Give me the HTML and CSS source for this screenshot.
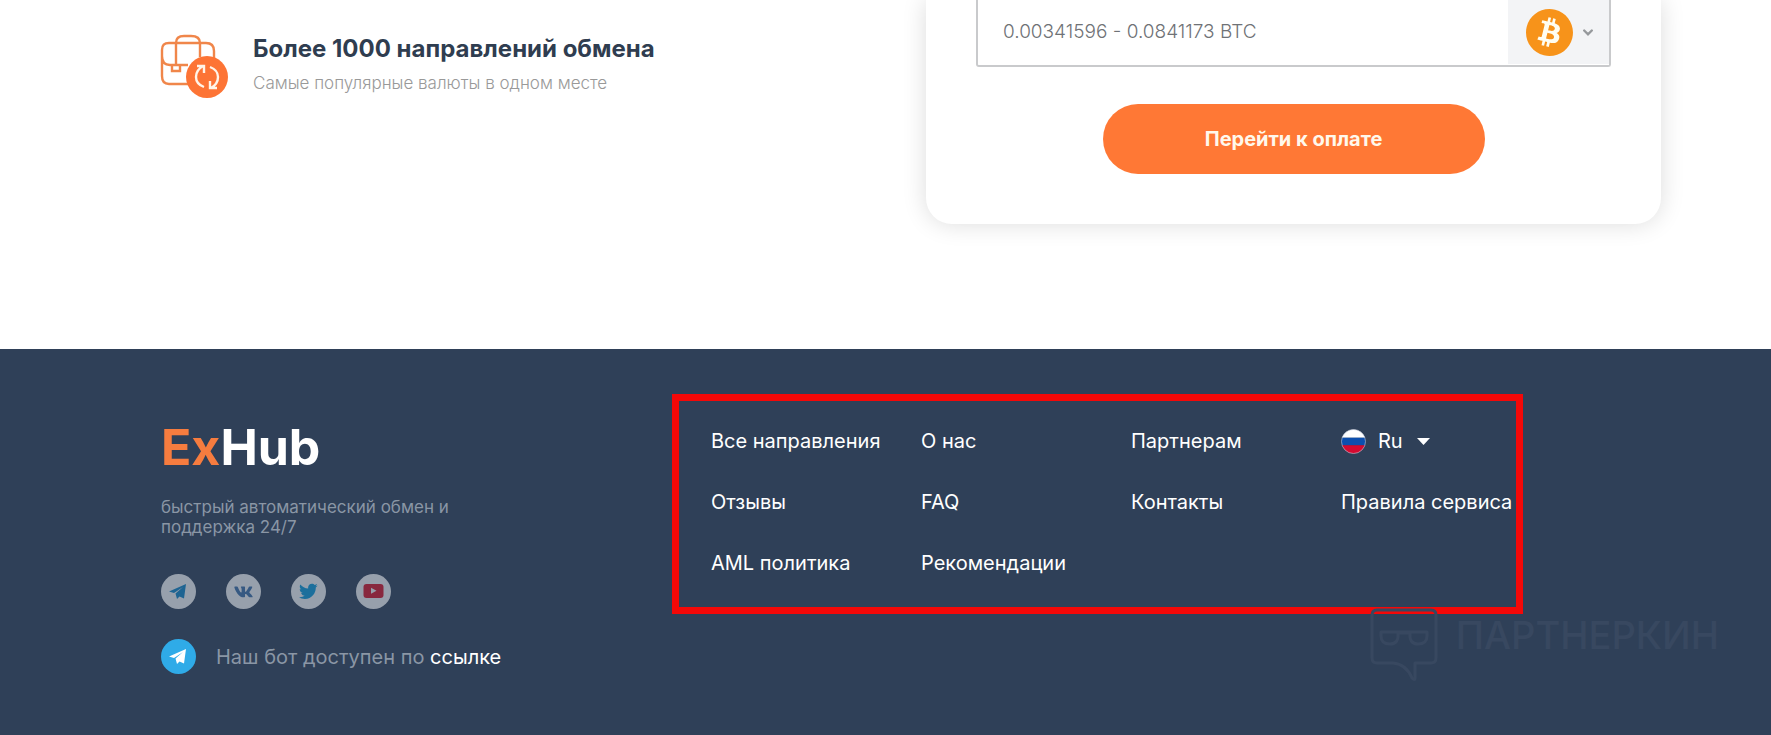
FILE: index.html
```html
<!DOCTYPE html>
<html lang="ru">
<head>
<meta charset="utf-8">
<meta name="viewport" content="width=device-width, initial-scale=1">
<title>ExHub</title>
<link rel="stylesheet" href="styles.css">
</head>
<body>
<main class="hero">
  <section class="feature">
    <svg class="feature-icon" viewBox="0 0 68 66" fill="none" stroke="#f0864a" stroke-width="2.4" aria-hidden="true">
      <path d="M16 32V9q0-7 8-7h7q9 0 9 7v14M16 9h30q8 0 8 8v8M16 9H9q-7 0-7 7v26q0 8 7 8h20M2 22q0 9 8 9h18M12 31v6h8v-6"/>
      <circle cx="47" cy="43" r="21" fill="#fd7435" stroke="none"/>
      <g stroke="#fff4e8" stroke-width="2.4">
        <path d="M44 53q-8-3-8-10t7-11M37 32h7v7M50 33q8 3 8 10t-7 11M57 54h-7v-7"/>
      </g>
    </svg>
    <div class="feature-text">
      <h2 class="feature-title">Более 1000 направлений обмена</h2>
      <p class="feature-note">Самые популярные валюты в одном месте</p>
    </div>
  </section>
  <form class="card">
    <div class="amount">
      <input class="amount-input" type="text" aria-label="Сумма" placeholder="0.00341596 - 0.0841173 BTC">
      <button class="currency" type="button" aria-label="Валюта: Bitcoin" aria-haspopup="listbox">
        <svg class="coin" viewBox="0 0 24 24" aria-hidden="true">
          <circle cx="12" cy="12" r="11.8" fill="#fffdf0"/>
          <path fill="#f7931a" d="M23.638 14.904c-1.602 6.43-8.113 10.34-14.542 8.736C2.67 22.05-1.244 15.525.362 9.105 1.962 2.67 8.475-1.243 14.9.358c6.43 1.605 10.342 8.115 8.738 14.548v-.002zm-6.35-4.613c.24-1.59-.974-2.45-2.64-3.03l.54-2.153-1.315-.33-.525 2.107c-.345-.087-.705-.167-1.064-.25l.526-2.127-1.32-.33-.54 2.165c-.285-.067-.565-.132-.84-.2l-1.815-.45-.35 1.407s.975.225.955.236c.535.136.63.486.615.766l-1.477 5.92c-.075.166-.24.406-.614.314.015.02-.96-.24-.96-.24l-.66 1.51 1.71.426.93.242-.54 2.19 1.32.327.54-2.17c.36.1.705.19 1.05.273l-.51 2.154 1.32.33.545-2.19c2.24.427 3.93.257 4.64-1.774.57-1.637-.03-2.58-1.217-3.196.854-.193 1.5-.76 1.68-1.93h.01zm-3.01 4.22c-.404 1.64-3.157.75-4.05.53l.72-2.9c.896.23 3.757.67 3.33 2.37zm.41-4.24c-.37 1.49-2.662.735-3.405.55l.654-2.64c.744.18 3.137.524 2.75 2.084v.006z"/>
        </svg>
        <svg class="chevron" viewBox="0 0 10 7" fill="none" stroke="#96999c" stroke-width="2.4" stroke-linecap="round" aria-hidden="true"><path d="M1.200 1.500L5 5.300l3.800-3.800"/></svg>
      </button>
    </div>
    <button class="pay" type="submit">Перейти к оплате</button>
  </form>
</main>
<footer class="footer">
  <div class="brand">
    <a class="logo" href="#"><span class="logo-accent">Ex</span>Hub</a>
    <p class="tagline">быстрый автоматический обмен и поддержка 24/7</p>
    <div class="socials">
      <a class="social" href="#" aria-label="Telegram"><svg viewBox="0 0 35 35"><circle cx="17.5" cy="17.5" r="17.5" fill="#fff"/><path fill="#0f88cc" d="M8 17.5L25 10l-2 14.5-4.500-2-2.500 2.500-1.500-5.500 7.500-6.500-9 6z"/></svg></a>
      <a class="social" href="#" aria-label="ВКонтакте"><svg viewBox="0 0 35 35"><circle cx="17.5" cy="17.5" r="17.5" fill="#fff"/><path fill="#3d72ad" transform="translate(7.700 9.200) scale(.0340)" d="M545 117.700c3.700-12.500 0-21.700-17.800-21.700h-58.900c-15 0-21.900 7.900-25.600 16.700 0 0-30 73.100-72.400 120.500-13.700 13.700-20 18.100-27.500 18.100-3.700 0-9.400-4.400-9.400-16.900V117.700c0-15-4.200-21.700-16.600-21.700h-92.600c-9.400 0-15 7-15 13.500 0 14.200 21.200 17.500 23.400 57.500v86.800c0 19-3.400 22.500-10.900 22.500-20 0-68.600-73.400-97.400-157.400-5.800-16.300-11.500-22.900-26.600-22.900H38.800c-16.800 0-20.200 7.900-20.200 16.700 0 15.600 20 93.100 93.100 195.500C160.400 378.100 229 416 291.400 416c37.500 0 42.100-8.400 42.100-22.900 0-66.800-3.400-73.100 15.400-73.100 8.700 0 23.700 4.400 58.700 38.100 40 40 46.600 57.900 69 57.900h58.900c16.800 0 25.300-8.400 20.400-25-11.200-34.900-86.900-106.700-90.300-111.500-8.700-11.200-6.200-16.200 0-26.200.1-.1 72-101.300 79.400-135.600z"/></svg></a>
      <a class="social" href="#" aria-label="Twitter"><svg viewBox="0 0 35 35"><circle cx="17.5" cy="17.5" r="17.5" fill="#fff"/><path fill="#0a9fe0" transform="translate(8 8) scale(.0365)" d="M459.370 151.716c.325 4.548.325 9.097.325 13.645 0 138.720-105.583 298.558-298.558 298.558-59.452 0-114.680-17.219-161.137-47.106 8.447.974 16.568 1.299 25.340 1.299 49.055 0 94.213-16.568 130.274-44.832-46.132-.975-84.792-31.188-98.112-72.772 6.498.974 12.995 1.624 19.818 1.624 9.421 0 18.843-1.300 27.614-3.573-48.081-9.747-84.143-51.980-84.143-102.985v-1.299c13.969 7.797 30.214 12.670 47.431 13.319-28.264-18.843-46.781-51.005-46.781-87.391 0-19.492 5.197-37.360 14.294-52.954 51.655 63.675 129.300 105.258 216.365 109.807-1.624-7.797-2.599-15.918-2.599-24.040 0-57.828 46.782-104.934 104.934-104.934 30.213 0 57.502 12.670 76.670 33.137 23.715-4.548 46.456-13.320 66.599-25.340-7.798 24.366-24.366 44.833-46.132 57.827 21.117-2.273 41.584-8.122 60.426-16.243-14.292 20.791-32.161 39.308-52.628 54.253z"/></svg></a>
      <a class="social" href="#" aria-label="YouTube"><svg viewBox="0 0 35 35"><circle cx="17.5" cy="17.5" r="17.5" fill="#fff"/><rect x="7.500" y="10" width="20" height="14" rx="3" fill="#e01226"/><path fill="#fff" d="M15 13.800v6l5.500-3z"/></svg></a>
    </div>
    <div class="bot">
      <svg class="bot-icon" viewBox="0 0 35 35" aria-hidden="true"><circle cx="17.5" cy="17.5" r="17.5" fill="#2fabe8"/><path fill="#fff" d="M8 17.500L25 10l-2 14.500-4.500-2-2.500 2.500-1.500-5.500 7.500-6.500-9 6z"/></svg>
      <p class="bot-text">Наш бот доступен по <a href="#">ссылке</a></p>
    </div>
  </div>
  <nav class="links" aria-label="Меню">
    <a href="#">Все направления</a>
    <a href="#">О нас</a>
    <a href="#">Партнерам</a>
    <label class="lang">
      <svg class="flag" viewBox="0 0 26 26" aria-hidden="true">
        <clipPath id="flag-round"><circle cx="13" cy="13" r="12.500"/></clipPath>
        <g clip-path="url(#flag-round)"><path fill="#fff" d="M0 0h26v9H0z"/><path fill="#0d4fae" d="M0 9h26v8H0z"/><path fill="#d50a30" d="M0 17h26v9H0z"/></g>
        <circle cx="13" cy="13" r="12.500" fill="none" stroke="#c9cfe0" stroke-width=".6"/>
      </svg>
      <select class="lang-select" aria-label="Язык"><option>Ru</option><option>En</option></select>
      <svg class="caret" viewBox="0 0 13 7" aria-hidden="true"><path fill="#fff" d="M0 0h13L6.500 7z"/></svg>
    </label>
    <a href="#">Отзывы</a>
    <a href="#">FAQ</a>
    <a href="#">Контакты</a>
    <a href="#">Правила сервиса</a>
    <a href="#">AML политика</a>
    <a href="#">Рекомендации</a>
  </nav>
  <div class="watermark">
    <svg class="watermark-icon" viewBox="0 0 68 74" fill="none" stroke="currentColor" stroke-width="3" stroke-linejoin="round" aria-hidden="true">
      <path d="M7 2h54q5 0 5 5v43q0 5-5 5H45v15q0 3-3 0-6-14-19-15H7q-5 0-5-5V7q0-5 5-5z"/>
      <path d="M11 24h46v4q0 8-9 8t-8-11H28q1 11-8 11t-9-8z"/>
    </svg>
    <span class="watermark-text">ПАРТНЕРКИН</span>
  </div>
</footer>
</body>
</html>
```
FILE: styles.css
```css
* {
  box-sizing: border-box;
}

body {
  margin: 0;
  min-height: 100vh;
  display: flex;
  flex-direction: column;
  background: #fff;
  color: #2f4058;
  font-family: Inter, "Noto Sans", sans-serif;
}

h2,
p {
  margin: 0;
}

a {
  color: inherit;
  text-decoration: none;
}

svg {
  display: block;
}

button,
input,
select {
  font: inherit;
  border: 0;
  padding: 0;
  margin: 0;
}

.hero {
  display: grid;
  grid-template-columns: 766fr 735fr;
  align-items: start;
  padding: 0 110px 125px 160px;
}

.feature {
  display: flex;
  gap: 25px;
  padding-top: 34px;
}

.feature-icon {
  width: 68px;
  height: 66px;
}

.feature-title {
  font-size: 24px;
  line-height: 30px;
  font-weight: 700;
  color: #2f3d50;
}

.feature-note {
  margin-top: 7px;
  font-size: 17px;
  line-height: 24px;
  font-weight: 300;
  color: #999;
}

.card {
  display: flex;
  flex-direction: column;
  align-items: center;
  gap: 37px;
  padding: 0 50px 50px;
  border-radius: 0 0 26px 26px;
  box-shadow: 0 0 24px rgba(0, 0, 0, 0.14);
}

.amount {
  display: flex;
  align-self: stretch;
  height: 67px;
  border: 2px solid #c9cacc;
  border-top: 0;
  border-radius: 0 0 3px 3px;
}

.amount-input {
  flex: 1;
  min-width: 0;
  padding: 0 25px 3px;
  background: transparent;
  font-size: 19px;
  font-weight: 300;
}

.amount-input::placeholder {
  color: #6f7276;
  opacity: 1;
}

.currency {
  display: flex;
  align-items: center;
  gap: 10px;
  width: 101px;
  height: 64px;
  padding-left: 18px;
  background: #f3f4f6;
}

.coin {
  width: 47px;
  height: 47px;
}

.chevron {
  width: 10px;
  height: 7px;
}

.pay {
  width: 382px;
  height: 70px;
  border-radius: 35px;
  background: #ff7835;
  color: #fff8ec;
  font-size: 20px;
  font-weight: 700;
}

.footer {
  position: relative;
  flex: 1;
  display: grid;
  grid-template-columns: 511fr 851fr;
  align-items: start;
  padding: 45px 248px 60px 161px;
  background: #2f4058;
}

.brand {
  padding-top: 23px;
}

.logo {
  display: block;
  color: #fff;
  font-size: 50px;
  line-height: 60px;
  font-weight: 700;
}

.logo-accent {
  color: #f67c3f;
}

.tagline {
  max-width: 310px;
  margin-top: 20px;
  color: #8a96a5;
  font-size: 17px;
  line-height: 20px;
}

.socials {
  display: flex;
  gap: 30px;
  margin-top: 37px;
}

.social {
  width: 35px;
  opacity: 0.5;
}

.bot {
  display: flex;
  align-items: center;
  gap: 20px;
  margin-top: 30px;
}

.bot-icon {
  width: 35px;
}

.bot-text {
  color: #8a96a5;
  font-size: 20px;
  line-height: 24px;
}

.bot-text a {
  color: #fff;
}

.links {
  display: grid;
  grid-template-columns: 6fr 6fr 6fr 5fr;
  row-gap: 36px;
  padding: 28px 0 31px 32px;
  border: 7px solid #f40808;
  color: #fff;
  font-size: 20px;
  line-height: 25px;
  white-space: nowrap;
}

.links > * {
  min-width: 0;
}

.lang {
  display: flex;
  align-items: center;
}

.flag {
  width: 25px;
  height: 25px;
}

.lang-select {
  appearance: none;
  width: 51px;
  padding-left: 12px;
  background: transparent;
  color: #fff;
}

.caret {
  width: 13px;
  height: 7px;
}

.watermark {
  position: absolute;
  right: 52px;
  bottom: 53px;
  display: flex;
  gap: 18px;
  color: #384860;
}

.watermark-icon {
  width: 68px;
  height: 74px;
}

.watermark-text {
  font-size: 38px;
  line-height: 54px;
  font-weight: 500;
}
```
